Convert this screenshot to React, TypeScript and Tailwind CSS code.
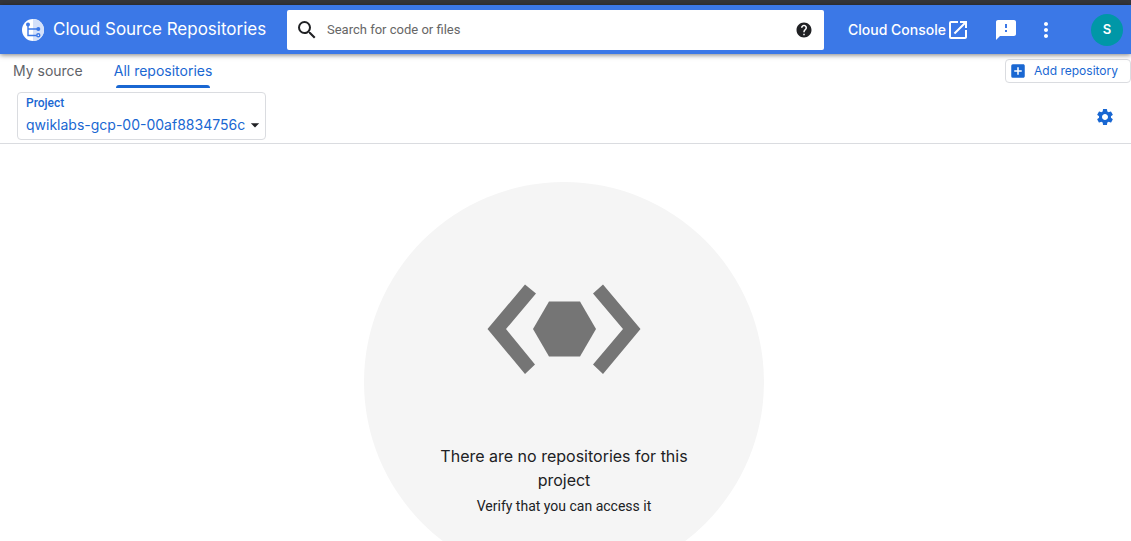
import React from "react";
import {
  MdAddBox,
  MdArrowDropDown,
  MdFeedback,
  MdHelp,
  MdMoreVert,
  MdOpenInNew,
  MdSearch,
  MdSettings,
} from "react-icons/md";

function Logo() {
  return (
    <svg viewBox="0 0 22 22" className="size-[22px] shrink-0" aria-hidden="true">
      <circle cx="11" cy="11" r="11" fill="#fff" />
      <path d="M11 0a11 11 0 0 1 0 22z" fill="#d4e1fa" />
      <g fill="none" stroke="#3b78e7" strokeWidth="1.4">
        <path d="M6 6v10.5h9M6 10h10" />
        <circle cx="16.3" cy="16.3" r="1.5" fill="#fff" />
      </g>
      <circle cx="6" cy="5.5" r="2" fill="#3b78e7" />
      <circle cx="16.3" cy="10" r="2" fill="#3b78e7" />
    </svg>
  );
}

function CodeGlyph() {
  return (
    <svg viewBox="0 0 154 90" className="h-[90px] w-[154px]" fill="#757575" aria-hidden="true">
      <path d="M38 0.500 49 9.500 19 45 48 80.500 38 90 0.500 45z" />
      <path d="M116 0.500 106 9.500 136 45 106 80.500 116 90 153.500 45z" />
      <path d="M62 17.500h31L109 45 93 72.500H62L46 45z" />
    </svg>
  );
}

function Header() {
  return (
    <header className="relative z-10 flex h-[49px] shrink-0 items-center bg-[#3b78e7] pr-2 text-white shadow-[0_1px_5px_rgba(0,0,0,0.5)]">
      <a href="#home" className="flex w-[287px] shrink-0 items-center gap-[9px] pl-[22px] text-[17px] whitespace-nowrap">
        <Logo />
        Cloud Source Repositories
      </a>
      <form className="flex h-10 min-w-0 flex-1 items-center rounded-xs bg-white pr-[11px] pl-2" onSubmit={(e) => e.preventDefault()}>
        <button type="submit" aria-label="Search" className="text-[#202124]">
          <MdSearch className="size-6" />
        </button>
        <input
          type="text"
          aria-label="Search for code or files"
          placeholder="Search for code or files"
          className="ml-2 min-w-0 flex-1 font-[Roboto,sans-serif] text-[13px] text-[#202124] outline-none placeholder:text-[#666]"
        />
        <button type="button" aria-label="Search help" className="text-[#202124]">
          <MdHelp className="size-[18px]" />
        </button>
      </form>
      <a href="#console" className="ml-6 flex items-center text-sm font-medium whitespace-nowrap">
        Cloud Console
        <MdOpenInNew className="size-6" />
      </a>
      <button type="button" aria-label="Send feedback" className="ml-6">
        <MdFeedback className="size-6" />
      </button>
      <button type="button" aria-label="More options" className="ml-4">
        <MdMoreVert className="size-6" />
      </button>
      <button type="button" aria-label="Account" className="ml-[33px] size-8 rounded-full bg-[#0097a7] text-[13px] font-semibold">
        S
      </button>
    </header>
  );
}

function Toolbar() {
  return (
    <div className="flex h-[38px] shrink-0 items-start justify-between">
      <nav className="flex gap-[31px] pl-[13px] text-sm">
        <a href="#mine" className="flex h-[34px] items-center text-[#5f6368]">
          My source
        </a>
        <a href="#all" className="flex h-[34px] flex-col text-[#1967d2]">
          <span className="flex flex-1 items-center pt-[3px]">All repositories</span>
          <span className="mx-[2px] h-[3px] rounded-t-sm bg-[#1967d2]" />
        </a>
      </nav>
      <button
        type="button"
        className="mt-[5px] flex h-6 items-center gap-[7px] rounded border border-[#dadce0] pr-3 pl-[3px] text-xs text-[#1967d2]"
      >
        <MdAddBox className="size-[18px]" />
        Add repository
      </button>
    </div>
  );
}

function ProjectBar() {
  return (
    <div className="flex h-[52px] shrink-0 items-start justify-between border-b border-[#dadce0] pr-4 pl-[17px]">
      <div className="flex h-12 w-[249px] flex-col rounded border border-[#dadce0] pl-2">
        <label htmlFor="project" className="pt-[2px] font-[Roboto,sans-serif] text-xs leading-4 font-medium text-[#1967d2]">
          Project
        </label>
        <div className="relative flex items-center pt-[2px]">
          <select id="project" className="h-6 w-full appearance-none bg-transparent text-sm text-[#1967d2] outline-none">
            <option>qwiklabs-gcp-00-00af8834756c</option>
          </select>
          <MdArrowDropDown className="pointer-events-none absolute right-0 size-5 text-[#202124]" />
        </div>
      </div>
      <button type="button" aria-label="Settings" className="mt-[15px] text-[#1967d2]">
        <MdSettings className="size-5" />
      </button>
    </div>
  );
}

function EmptyState() {
  return (
    <main className="flex justify-center pt-[38px] pr-[3px]">
      <section className="flex size-[400px] shrink-0 flex-col items-center rounded-full bg-[#f5f5f5] px-[70px] pt-[102px] text-center text-[#202124]">
        <CodeGlyph />
        <h1 className="mt-[70px] text-base leading-6">There are no repositories for this project</h1>
        <p className="mt-[2px] font-[Roboto,sans-serif] text-sm leading-6">Verify that you can access it</p>
      </section>
    </main>
  );
}

export default function App() {
  return (
    <div className="flex h-screen flex-col overflow-hidden bg-white font-[Inter,sans-serif]">
      <div className="h-[5px] shrink-0 bg-[#35363a]" />
      <Header />
      <Toolbar />
      <ProjectBar />
      <EmptyState />
    </div>
  );
}
